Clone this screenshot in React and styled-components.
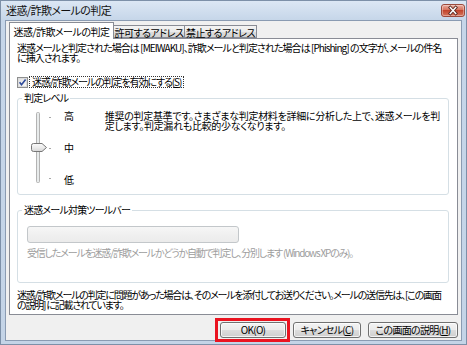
import React from "react";
import styled, { createGlobalStyle } from "styled-components";

const GlobalStyle = createGlobalStyle`
  html, body { margin: 0; padding: 0; background: #fff; }
  body {
    font-family: "Noto Sans CJK JP", "Noto Sans", sans-serif;
    font-size: 10px;
    line-height: 10px;
    color: #000;
    font-feature-settings: "palt";
    letter-spacing: -0.5px;
  }
  * { box-sizing: border-box; }
`;

const Window = styled.div`
  width: 467px;
  height: 345px;
  border: 1px solid #7d90a8;
  background: linear-gradient(180deg, #dce7f4 0px, #c6d6e9 19px, #c4d4e7 100%);
  display: flex;
  flex-direction: column;
  overflow: hidden;
`;

const TitleBar = styled.div`
  height: 19px;
  flex-shrink: 0;
  display: flex;
  justify-content: space-between;
  align-items: flex-start;
  padding: 0 1px 0 5px;
`;

const Title = styled.div`
  font-size: 11px;
  line-height: 18px;
  color: #101010;
  letter-spacing: -0.6px;
`;

const CloseButton = styled.div`
  width: 24px;
  height: 13px;
  margin-top: 3px;
  display: flex;
`;

const Client = styled.div`
  flex: 1;
  margin: 0 4px 3px 4px;
  border: 1px solid #8a9bb2;
  background: #f0f0f0;
  display: flex;
  flex-direction: column;
  padding: 1px 3px 0 3px;
`;

const TabRow = styled.div`
  height: 16px;
  flex-shrink: 0;
  display: flex;
  align-items: flex-end;
`;

const Tab = styled.div`
  position: relative;
  width: ${(p) => p.$w}px;
  height: ${(p) => (p.$active ? 17 : 13)}px;
  margin-bottom: ${(p) => (p.$active ? -1 : 0)}px;
  margin-left: ${(p) => (p.$first ? 0 : -1)}px;
  z-index: ${(p) => (p.$active ? 1 : 0)};
  border: 1px solid #898c95;
  border-bottom: ${(p) => (p.$active ? "none" : "1px solid #898c95")};
  background: ${(p) =>
    p.$active
      ? "#fff"
      : "linear-gradient(180deg, #f3f3f3 0%, #ebebeb 50%, #dddddd 51%, #d3d3d3 100%)"};
  padding-top: ${(p) => (p.$active ? 4 : 2)}px;
  text-align: center;
  white-space: nowrap;
`;

const Panel = styled.div`
  height: 277px;
  flex-shrink: 0;
  border: 1px solid #898c95;
  background: #fff;
  padding: 4px 8px 0 7px;
  display: flex;
  flex-direction: column;
`;

const Para = styled.div`
  white-space: nowrap;
  margin-top: ${(p) => p.$mt || 0}px;
  color: ${(p) => p.$color || "#000"};
  letter-spacing: ${(p) => (p.$ls !== undefined ? p.$ls : -0.5)}px;
`;

const CheckRow = styled.div`
  margin-top: 13px;
  height: 12px;
  display: flex;
  align-items: center;
`;

const CheckLabel = styled.span`
  margin-left: 1px;
  padding: 0 2px;
  border: 1px dotted #333;
  line-height: 10px;
  white-space: nowrap;
  letter-spacing: -1.1px;
`;

const Group = styled.fieldset`
  margin: ${(p) => p.$mt}px 0 0 0;
  padding: ${(p) => p.$pt}px 8px ${(p) => p.$pb}px 4px;
  border: 1px solid #d5dfe5;
  border-radius: 3px;
  min-width: 0;
`;

const Legend = styled.legend`
  padding: 0 2px;
  line-height: 10px;
  white-space: nowrap;
  letter-spacing: -0.8px;
`;

const LevelRow = styled.div`
  display: flex;
  align-items: flex-start;
  padding-left: 8px;
`;

const SliderArt = styled.svg`
  margin-top: 1px;
  flex-shrink: 0;
`;

const Levels = styled.div`
  width: 59px;
  margin-left: 10px;
  display: flex;
  flex-direction: column;
  gap: 22px;
`;

const ToolbarBody = styled.div`
  padding-left: 5px;
  display: flex;
  flex-direction: column;
`;

const DisabledField = styled.div`
  width: 212px;
  height: 17px;
  border: 1px solid #c3c7ca;
  border-radius: 3px;
  background: linear-gradient(180deg, #f6f6f6 0%, #f0f0f0 50%, #ebebeb 100%);
`;

const ButtonRow = styled.div`
  flex-shrink: 0;
  margin-top: 7px;
  height: 16px;
  display: flex;
  justify-content: flex-end;
  gap: 7px;
`;

const Button = styled.div`
  position: relative;
  width: ${(p) => p.$w}px;
  height: 16px;
  border: 1px solid #707070;
  border-radius: 3px;
  background: linear-gradient(180deg, #f3f3f3 0%, #ebebeb 50%, #dddddd 51%, #cfcfcf 100%);
  box-shadow: inset 0 0 0 1px rgba(255, 255, 255, 0.75);
  text-align: center;
  line-height: 14px;
  white-space: nowrap;
  letter-spacing: -0.7px;
`;

const Highlight = styled.div`
  position: absolute;
  top: -5px;
  bottom: -5px;
  left: -6px;
  right: -5px;
  border: 3px solid #ea1320;
  pointer-events: none;
`;

function CloseIcon() {
  return (
    <svg width="24" height="13" viewBox="0 0 24 13">
      <defs>
        <linearGradient id="closeg" x1="0" y1="0" x2="0" y2="1">
          <stop offset="0" stopColor="#eab0a3" />
          <stop offset="0.45" stopColor="#d7735e" />
          <stop offset="0.5" stopColor="#c2452d" />
          <stop offset="1" stopColor="#d77a62" />
        </linearGradient>
      </defs>
      <rect x="0.5" y="0.5" width="23" height="12" rx="2.5" fill="url(#closeg)" stroke="#9b4a3c" />
      <rect x="1.5" y="1.5" width="21" height="10" rx="1.5" fill="none" stroke="rgba(255,255,255,0.35)" />
      <path d="M9.3 3.6 L14.7 9.4 M14.7 3.6 L9.3 9.4" stroke="#5a2a22" strokeWidth="3.2" strokeLinecap="square" />
      <path d="M9.3 3.6 L14.7 9.4 M14.7 3.6 L9.3 9.4" stroke="#fff" strokeWidth="1.5" strokeLinecap="square" />
    </svg>
  );
}

function CheckIcon() {
  return (
    <svg width="11" height="11" viewBox="0 0 11 11">
      <defs>
        <linearGradient id="cbg" x1="0" y1="0" x2="1" y2="1">
          <stop offset="0" stopColor="#e0e0e0" />
          <stop offset="1" stopColor="#fafafa" />
        </linearGradient>
      </defs>
      <rect x="0.5" y="0.5" width="10" height="10" fill="#fbfbfb" stroke="#8e8f8f" />
      <rect x="1.5" y="1.5" width="8" height="8" fill="url(#cbg)" stroke="#dcdcdc" />
      <path d="M2.6 5.3 L4.5 7.8 L8.6 2.4" fill="none" stroke="#2d4a9a" strokeWidth="1.6" />
    </svg>
  );
}

function SliderIcon() {
  return (
    <SliderArt width="24" height="72" viewBox="0 0 24 72">
      <defs>
        <linearGradient id="thumbg" x1="0" y1="0" x2="0" y2="1">
          <stop offset="0" stopColor="#fbfbfb" />
          <stop offset="0.5" stopColor="#ececec" />
          <stop offset="1" stopColor="#d6d6d6" />
        </linearGradient>
      </defs>
      <rect x="6.5" y="0.5" width="3" height="70" rx="1" fill="#e8ebeb" stroke="#b3b3b3" />
      <rect x="19" y="5" width="2" height="1" fill="#a8a8a8" />
      <rect x="19" y="36" width="2" height="1" fill="#a8a8a8" />
      <rect x="19" y="66" width="2" height="1" fill="#a8a8a8" />
      <path
        d="M3.5 31.5 H12 L16.5 35.5 L12 39.5 H3.5 Q1.5 39.5 1.5 37.5 V33.5 Q1.5 31.5 3.5 31.5 Z"
        fill="url(#thumbg)"
        stroke="#777"
      />
    </SliderArt>
  );
}

export default function App() {
  return (
    <>
      <GlobalStyle />
      <Window>
        <TitleBar>
          <Title>迷惑/詐欺メールの判定</Title>
          <CloseButton>
            <CloseIcon />
          </CloseButton>
        </TitleBar>
        <Client>
          <TabRow>
            <Tab $active $first $w={105}>迷惑/詐欺メールの判定</Tab>
            <Tab $w={72}>許可するアドレス</Tab>
            <Tab $w={73}>禁止するアドレス</Tab>
          </TabRow>
          <Panel>
            <Para $ls={-0.95}>
              迷惑メールと判定された場合は [MEIWAKU]、詐欺メールと判定された場合は [Phishing] の文字が、メールの件名
              <br />
              に挿入されます。
            </Para>
            <CheckRow>
              <CheckIcon />
              <CheckLabel>
                迷惑/詐欺メールの判定を有効にする(<u>S</u>)
              </CheckLabel>
            </CheckRow>
            <Group $mt={5} $pt={8} $pb={9}>
              <Legend>判定レベル</Legend>
              <LevelRow>
                <SliderIcon />
                <Levels>
                  <span>高</span>
                  <span>中</span>
                  <span>低</span>
                </Levels>
                <Para $ls={-0.3}>
                  推奨の判定基準です。さまざまな判定材料を詳細に分析した上で、迷惑メールを判
                  <br />
                  定します。判定漏れも比較的少なくなります。
                </Para>
              </LevelRow>
            </Group>
            <Group $mt={10} $pt={11} $pb={24}>
              <Legend>迷惑メール対策ツールバー</Legend>
              <ToolbarBody>
                <DisabledField />
                <Para $mt={5} $color="#9d9d9d" $ls={-1.2}>
                  受信したメールを迷惑/詐欺メールかどうか自動で判定し、分別します (Windows XPのみ)。
                </Para>
              </ToolbarBody>
            </Group>
            <Para $mt={7} $ls={-1.2}>
              迷惑/詐欺メールの判定に問題があった場合は、そのメールを添付してお送りください。メールの送信先は、[この画面
              <br />
              の説明] に記載されています。
            </Para>
          </Panel>
          <ButtonRow>
            <Button $w={66}>
              OK(O)
              <Highlight />
            </Button>
            <Button $w={68}>
              キャンセル(<u>C</u>)
            </Button>
            <Button $w={90}>
              この画面の説明(<u>H</u>)
            </Button>
          </ButtonRow>
        </Client>
      </Window>
    </>
  );
}
